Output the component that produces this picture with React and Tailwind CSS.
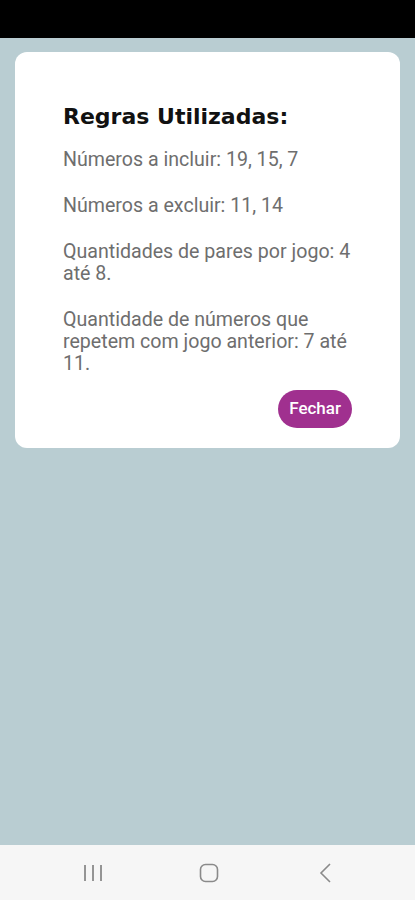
export default function App() {
  return (
    <div className="w-[415px] h-[900px] flex flex-col bg-[#b9cdd2]" style={{ fontFamily: "Roboto, 'Liberation Sans', sans-serif" }}>
      {/* barra de status */}
      <div className="h-[38px] bg-black" />

      <div className="flex-1 px-[15px] pt-[14px]">
        <div className="bg-white rounded-[12px] pl-[48px] pr-[46px] pt-[51px] pb-[20px]">
          <h2
            className="text-[22px] leading-[28px] font-bold text-[#111] mb-[18px]"
            style={{ fontFamily: "'DejaVu Sans', 'Open Sans', sans-serif" }}
          >
            Regras Utilizadas:
          </h2>
          <div className="text-[19.6px] leading-[22px] text-[#6e6e6e] space-y-[24px]">
            <p>Números a incluir: 19, 15, 7</p>
            <p>Números a excluir: 11, 14</p>
            <p>Quantidades de pares por jogo: 4 até 8.</p>
            <p>Quantidade de números que repetem com jogo anterior: 7 até 11.</p>
          </div>
          <div className="flex justify-end mt-[15px] pr-[2px]">
            <button className="h-[38px] px-[11px] rounded-full bg-[#a0308f] text-white text-[17px] font-medium">
              Fechar
            </button>
          </div>
        </div>
      </div>

      {/* barra de navegação */}
      <div className="h-[55px] bg-[#f6f6f6] flex items-center justify-center gap-[96px] pl-[3px]">
        <svg width="20" height="18" viewBox="0 0 20 18" className="text-[#8a8a8a]">
          <path d="M2 1v16M10 1v16M18 1v16" stroke="currentColor" strokeWidth="1.8" fill="none" />
        </svg>
        <svg width="20" height="20" viewBox="0 0 20 20" className="text-[#8a8a8a]">
          <rect x="1.5" y="1.5" width="17" height="17" rx="5" stroke="currentColor" strokeWidth="1.6" fill="none" />
        </svg>
        <svg width="20" height="20" viewBox="0 0 20 20" className="text-[#8a8a8a]">
          <path d="M15 1L6 10l9 9" stroke="currentColor" strokeWidth="1.6" fill="none" />
        </svg>
      </div>
    </div>
  );
}
